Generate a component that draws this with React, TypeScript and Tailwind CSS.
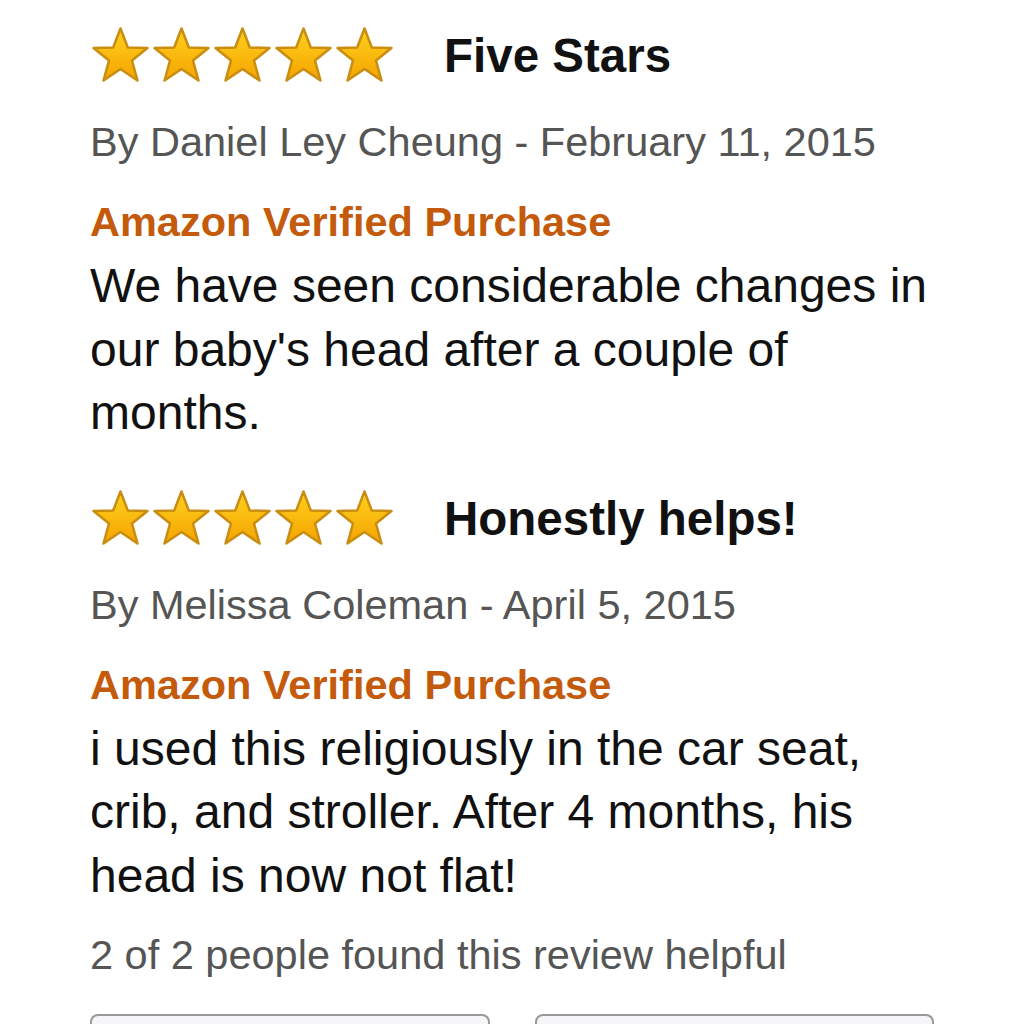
const reviews = [
  {
    title: "Five Stars",
    author: "Daniel Ley Cheung",
    date: "February 11, 2015",
    body: ["We have seen considerable changes in", "our baby's head after a couple of", "months."],
  },
  {
    title: "Honestly helps!",
    author: "Melissa Coleman",
    date: "April 5, 2015",
    body: ["i used this religiously in the car seat,", "crib, and stroller. After 4 months, his", "head is now not flat!"],
  },
];

function Star({ id }: { id: string }) {
  return (
    <svg width="61" height="60" viewBox="0 0 61 60" className="shrink-0">
      <defs>
        <linearGradient id={id} x1="0" y1="0" x2="0" y2="1">
          <stop offset="0" stopColor="#ffd21f" />
          <stop offset="1" stopColor="#f5a300" />
        </linearGradient>
      </defs>
      <polygon
        points="30.5,2.5 37.8,21.5 57.5,22 42,34.5 47.5,54.5 30.5,43 13.5,54.5 19,34.5 3.5,22 23.2,21.5"
        fill={`url(#${id})`}
        stroke="#c98d12"
        strokeWidth="2.5"
        strokeLinejoin="round"
      />
    </svg>
  );
}

function Stars({ prefix }: { prefix: string }) {
  return (
    <div className="flex">
      {[0, 1, 2, 3, 4].map((i) => (
        <Star key={i} id={`${prefix}-g${i}`} />
      ))}
    </div>
  );
}

export default function App() {
  return (
    <div
      className="w-[1024px] h-[1024px] overflow-hidden bg-white px-[90px] pt-[26px]"
      style={{ fontFamily: '"Liberation Sans", Arial, sans-serif' }}
    >
      {reviews.map((r, idx) => (
        <div key={idx} className={idx === 0 ? "" : "mt-[44px]"}>
          <div className="flex items-center h-[60px]">
            <Stars prefix={`r${idx}`} />
            <span className="ml-[49px] text-[47.5px] font-bold text-[#111]">{r.title}</span>
          </div>
          <div className="mt-[25px] text-[41.5px] leading-[62px] text-[#555]">
            By {r.author} - {r.date}
          </div>
          <div className="mt-[18px] text-[41.5px] leading-[62px] font-bold text-[#c45a0c]">
            Amazon Verified Purchase
          </div>
          <div className="mt-[1px] text-[48px] leading-[63.5px] text-[#111]">
            {r.body.map((line, i) => (
              <div key={i} className="whitespace-nowrap">{line}</div>
            ))}
          </div>
        </div>
      ))}
      <div className="mt-[17px] text-[41.5px] leading-[62px] text-[#555]">
        2 of 2 people found this review helpful
      </div>
      <div className="mt-[28px] flex gap-[45px]">
        <div className="w-[400px] h-[60px] rounded-lg border-2 border-[#999] bg-[#f6f6f8]" />
        <div className="w-[400px] h-[60px] rounded-lg border-2 border-[#999] bg-[#f6f6f8]" />
      </div>
    </div>
  );
}
